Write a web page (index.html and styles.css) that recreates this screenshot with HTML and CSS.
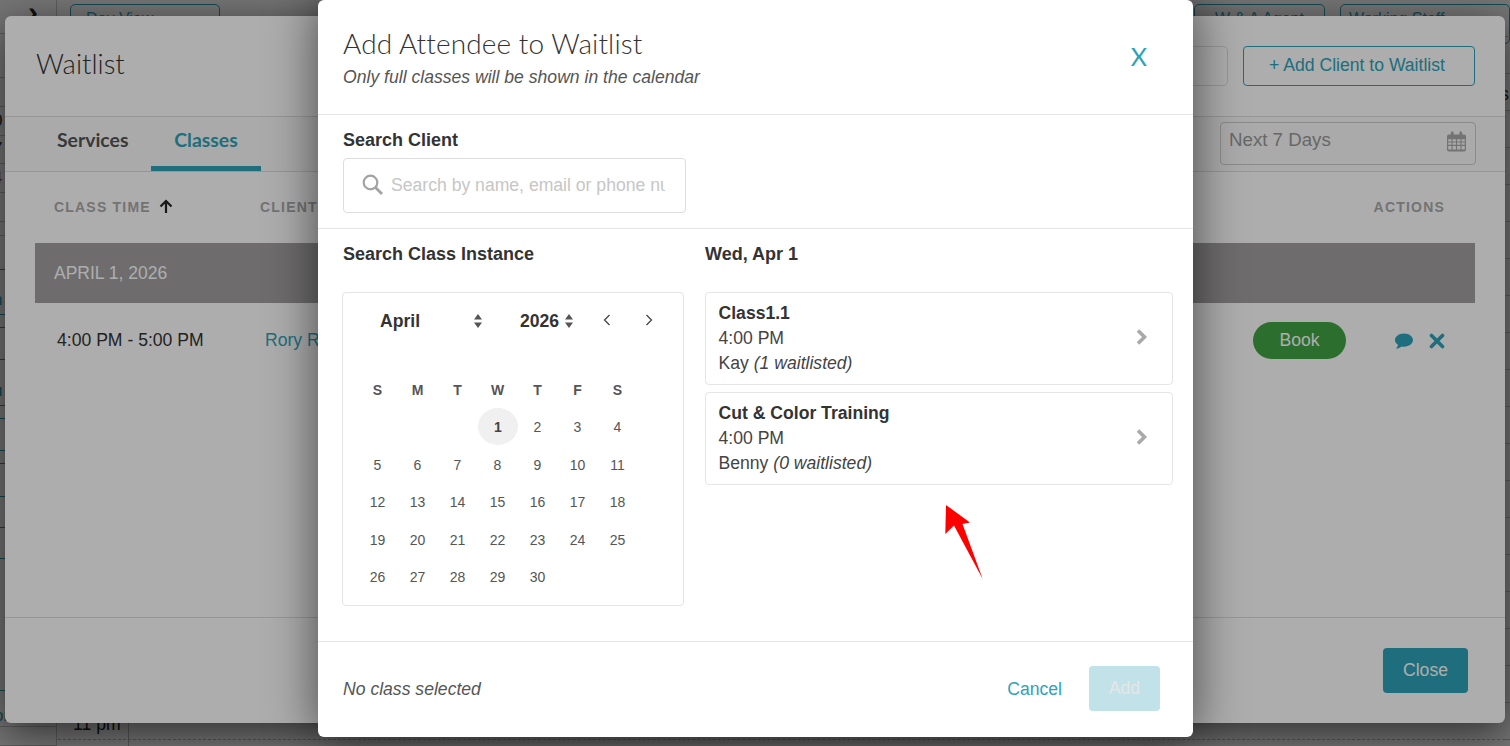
FILE: index.html
```html
<!DOCTYPE html>
<html lang="en">
<head>
<meta charset="utf-8">
<title>Add Attendee to Waitlist</title>
<link rel="stylesheet" href="styles.css">
</head>
<body>
<div class="page">
  <div class="topbar">
    <span class="chev-back">&#8250;</span>
    <div class="pill-select wide">Day View</div>
    <div class="topbar-fill"></div>
    <div class="pill-select mid">W &amp; A Agent</div>
    <div class="pill-select staff">Working Staff</div>
  </div>
  <div class="rail">
    <div></div><div></div><div></div><div><i>0</i></div><div><i>7</i></div><div><i class="warm">4</i></div><div></div><div></div>
    <div class="t"></div><div class="t"><i>n</i></div><div class="t"></div><div class="t"></div><div class="t"><i>u</i></div><div class="t"></div><div class="t"></div><div class="t"></div><div class="t"></div><div class="t"></div><div class="t"></div><div class="t"></div>
    <div class="end"><i>or</i></div><div class="end"></div><div class="last"><i>ck</i></div>
  </div>
  <div class="hour">11 pm</div>
  <div class="grid-right"><span>s</span></div>
  <div class="hour-line"></div>
</div>

<div class="scrim"></div>

<section class="waitlist">
  <header class="wl-head">
    <h2 class="wl-title">Waitlist</h2>
    <div class="wl-tools">
      <div class="wl-search"></div>
      <div class="wl-add">+ Add Client to Waitlist</div>
    </div>
  </header>
  <nav class="wl-tabs">
    <span class="tab">Services</span>
    <span class="tab active">Classes</span>
    <div class="wl-range">Next 7 Days
      <svg class="cal-icon" viewBox="0 0 20 21" width="19" height="21"><path fill="#aaa" d="M2 3h2V1.5a1.5 1.5 0 0 1 3 0V3h6V1.500a1.500 1.500 0 0 1 3 0V3h2a2 2 0 0 1 2 2v14a2 2 0 0 1-2 2H2a2 2 0 0 1-2-2V5a2 2 0 0 1 2-2zm-.7 5v2.400h3.400V8zm4.600 0v2.400h3.500V8zm4.700 0v2.400h3.500V8zm4.700 0v2.400h3.400V8zM1.300 11.600V14h3.400v-2.400zm4.600 0V14h3.500v-2.400zm4.700 0V14h3.500v-2.400zm4.700 0V14h3.400v-2.400zM1.300 15.200v3a.6.6 0 0 0 .6.6h2.800v-3.600zm4.600 0v3.600h3.500v-3.600zm4.700 0v3.600h3.500v-3.600zm4.700 0v3.600h2.800a.6.6 0 0 0 .6-.6v-3z"/></svg>
    </div>
  </nav>
  <div class="wl-body">
    <div class="wl-cols">
      <div class="wl-col-time">CLASS TIME <svg class="up" viewBox="0 0 14 14" width="14" height="14"><path fill="none" stroke="#222" stroke-width="2.200" d="M7 14V2M1.500 7.500 7 2l5.500 5.500"/></svg></div>
      <div class="wl-col-client">CLIENT</div>
      <div class="wl-col-actions">ACTIONS</div>
    </div>
    <div class="wl-band">APRIL 1, 2026</div>
    <div class="wl-row">
      <div class="wl-time">4:00 PM - 5:00 PM</div>
      <div class="wl-client">Rory Rogers</div>
      <div class="wl-book">Book</div>
      <svg class="wl-chat" viewBox="0 0 18 16" width="18" height="16"><path fill="#2ea3b8" d="M9 .5c5 0 9 2.900 9 6.600s-4 6.600-9 6.600c-.9 0-1.700-.1-2.500-.3C5.300 14.500 3.200 15.500.8 15.500c1.100-1 2-2.300 2.200-3.600C1.200 10.700 0 9 0 7.100 0 3.400 4 .5 9 .5z"/></svg>
      <svg class="wl-x" viewBox="0 0 16 16" width="16" height="16"><path fill="none" stroke="#2ea3b8" stroke-width="3.600" stroke-linecap="round" d="M2.500 2.500l11 11M13.500 2.500l-11 11"/></svg>
    </div>
  </div>
  <footer class="wl-foot"><div class="wl-close">Close</div></footer>
</section>

<div class="scrim"></div>

<section class="dialog">
  <header class="dg-head">
    <div>
      <h1 class="dg-title">Add Attendee to Waitlist</h1>
      <p class="dg-sub">Only full classes will be shown in the calendar</p>
    </div>
    <span class="dg-x">X</span>
  </header>
  <div class="dg-search">
    <label class="label" for="client">Search Client</label>
    <div class="search-box">
      <svg class="search-icon" viewBox="0 0 21 21" width="21" height="21"><circle cx="8.500" cy="8.500" r="6.800" fill="none" stroke="#a3a3a3" stroke-width="2.200"/><path d="M13.500 13.500 20 20" stroke="#a3a3a3" stroke-width="2.800" fill="none"/></svg>
      <input id="client" class="search-input" type="text" placeholder="Search by name, email or phone number">
    </div>
  </div>
  <div class="dg-body">
    <div class="col-left">
      <div class="label">Search Class Instance</div>
      <div class="calendar">
        <div class="cal-head">
          <span class="cal-month">April</span>
          <svg class="updown m" viewBox="0 0 8 14" width="8" height="14"><path fill="#555" d="M4 0l4 5.500H0zM4 14l4-5.500H0z"/></svg>
          <span class="cal-year">2026</span>
          <svg class="updown y" viewBox="0 0 8 14" width="8" height="14"><path fill="#555" d="M4 0l4 5.500H0zM4 14l4-5.500H0z"/></svg>
          <svg class="nav prev" viewBox="0 0 8 12" width="8" height="12"><path fill="none" stroke="#444" stroke-width="1.300" d="M6.500 1 1.500 6l5 5"/></svg>
          <svg class="nav next" viewBox="0 0 8 12" width="8" height="12"><path fill="none" stroke="#444" stroke-width="1.300" d="M1.500 1l5 5-5 5"/></svg>
        </div>
        <div class="cal-grid">
          <b>S</b><b>M</b><b>T</b><b>W</b><b>T</b><b>F</b><b>S</b>
          <span></span><span></span><span></span><span class="today">1</span><span>2</span><span>3</span><span>4</span>
          <span>5</span><span>6</span><span>7</span><span>8</span><span>9</span><span>10</span><span>11</span>
          <span>12</span><span>13</span><span>14</span><span>15</span><span>16</span><span>17</span><span>18</span>
          <span>19</span><span>20</span><span>21</span><span>22</span><span>23</span><span>24</span><span>25</span>
          <span>26</span><span>27</span><span>28</span><span>29</span><span>30</span>
        </div>
      </div>
    </div>
    <div class="col-right">
      <div class="label">Wed, Apr 1</div>
      <div class="cards">
        <div class="card">
          <div>
            <div class="card-name">Class1.1</div>
            <div>4:00 PM</div>
            <div>Kay <em>(1 waitlisted)</em></div>
          </div>
          <svg class="card-chev" viewBox="0 0 12 16" width="12" height="16"><path fill="none" stroke="#aaa" stroke-width="3.600" d="M2 1.500 8.500 8 2 14.500"/></svg>
        </div>
        <div class="card">
          <div>
            <div class="card-name">Cut &amp; Color Training</div>
            <div>4:00 PM</div>
            <div>Benny <em>(0 waitlisted)</em></div>
          </div>
          <svg class="card-chev" viewBox="0 0 12 16" width="12" height="16"><path fill="none" stroke="#aaa" stroke-width="3.600" d="M2 1.500 8.500 8 2 14.500"/></svg>
        </div>
      </div>
    </div>
  </div>
  <footer class="dg-foot">
    <em class="dg-status">No class selected</em>
    <span class="dg-cancel">Cancel</span>
    <span class="dg-add">Add</span>
  </footer>
</section>

<svg class="arrow" viewBox="0 0 40 76" width="40" height="76"><polygon fill="#ff0000" points="2,1 26,18.500 18.500,20 38.700,75 10,21.500 1.300,30"/></svg>
</body>
</html>
```

FILE: styles.css
```css
* { box-sizing: border-box; }
html, body { margin: 0; height: 100%; }
body {
  position: relative;
  width: 1510px;
  height: 746px;
  overflow: hidden;
  background: #fff;
  font-family: "Liberation Sans", Arial, sans-serif;
  font-size: 17.6px;
  color: #333;
}

/* page behind the dialogs */
.page { position: absolute; inset: 0; overflow: hidden; }
.topbar { display: flex; align-items: flex-start; height: 34px; padding-top: 4px; padding-left: 28px; }
.chev-back { width: 42px; font-size: 30px; line-height: 16px; font-weight: 700; color: #222; }
.pill-select { height: 40px; border: 1px solid #2ea3b8; border-radius: 5px; color: #2ea3b8; padding: 5px 15px; font-size: 16px; }
.wide { width: 150px; }
.topbar-fill { flex: 1; }
.mid { width: 131px; margin-right: 15px; text-align: center; }
.staff { width: 170px; flex: none; padding-left: 8px; }
.rail {
  position: absolute; left: 0; top: 0; width: 57px; height: 746px; overflow: hidden;
  border-right: 1px solid #ccc;
  display: grid;
  grid-template-rows: 34px 44px 29px 29px 28px 29px 29px 14px 34px 45px 13px 32px 46px 13px 32px 13px 33px 31px 31px 132px 36px 19px;
}
.rail > div { border-bottom: 1px solid #ccc; position: relative; }
.rail > .t { border-bottom-color: #2ea3b8; }
.rail i { position: absolute; left: -7px; bottom: 4px; font-style: normal; color: #2ea3b8; font-size: 17px; }
.rail > div:nth-child(-n+8) i { color: #333; }
.rail .warm { color: #c45a00 !important; }
.rail > .end i { left: -6px; bottom: 0; }
.rail > .last { border-bottom: 0; width: 36px; }
.rail > .last i { left: -2px; bottom: auto; top: 4px; }
.hour { position: absolute; left: 57px; top: 708px; width: 72px; height: 38px; padding: 6px 0 0 16px; font-size: 17.6px; border-right: 1px solid #bbb; color: #222; }
.hour-line { position: absolute; left: 58px; right: 0; top: 739px; border-top: 1px dashed #bbb; }
.grid-right {
  position: absolute; right: 0; top: 0; width: 5px; height: 746px;
  background: repeating-linear-gradient(to bottom, transparent 0 36px, #ccc 36px 37px);
  font-size: 18px;
}
.grid-right span { position: absolute; left: -5px; top: 84px; color: #333; }
.scrim { position: absolute; inset: 0; background: rgba(0, 0, 0, .32); }

/* waitlist dialog */
.waitlist {
  position: absolute; left: 5px; top: 16px; width: 1500px; height: 707px;
  background: #fff; border-radius: 6px;
  display: flex; flex-direction: column;
  box-shadow: 0 10px 40px rgba(0, 0, 0, .6);
}
.wl-head { height: 101px; flex: none; padding: 30px 30px 0 31px; display: flex; justify-content: space-between; border-bottom: 1px solid #ddd; }
.wl-title { margin: 0; padding-top: 1px; font: 300 27.500px/34px Lato, sans-serif; color: #333; }
.wl-tools { display: flex; gap: 15px; }
.wl-search { width: 200px; height: 40px; border: 1px solid #ddd; border-radius: 5px; }
.wl-add { width: 232px; height: 40px; border: 1px solid #2ea3b8; border-radius: 4px; color: #2ea3b8; text-align: center; line-height: 36px; padding-right: 4px; }
.wl-tabs { height: 55px; flex: none; display: flex; border-bottom: 1px solid #ddd; position: relative; background: #fbfbfb; }
.tab { width: 110px; text-align: center; font: 700 19.400px/46px Lato, sans-serif; color: #555; height: 54px; }
.tab:first-child { margin-left: 36px; margin-right: 0; text-align: left; padding-left: 16px; }
.tab.active { color: #2ea3b8; border-bottom: 5px solid #2ea3b8; }
.wl-range { margin-left: auto; margin-right: 29px; margin-top: 5px; width: 256px; height: 43px; border: 1px solid #ccc; border-radius: 4px; padding: 6px 8px; font-size: 18.700px; color: #999; position: relative; }
.cal-icon { position: absolute; right: 9px; top: 8px; }
.wl-body { flex: 1; }
.wl-cols { position: relative; height: 71px; font-size: 14px; font-weight: 700; letter-spacing: 1.200px; color: #aaa; }
.wl-col-time { position: absolute; left: 49px; top: 27px; }
.up { position: absolute; left: 105px; top: 0; }
.wl-col-client { position: absolute; left: 255px; top: 27px; }
.wl-col-actions { position: absolute; right: 60px; top: 27px; }
.wl-band { margin: 0 30px; height: 60px; background: #a3a0a1; color: #fff; padding-left: 19px; line-height: 60px; font-size: 17.500px; }
.wl-row { position: relative; height: 74px; }
.wl-time { position: absolute; left: 52px; top: 27px; }
.wl-client { position: absolute; left: 260px; top: 27px; color: #2ea3b8; }
.wl-book { position: absolute; left: 1248px; top: 19px; width: 93px; height: 37px; border-radius: 19px; background: #41a243; color: #fff; text-align: center; line-height: 36px; }
.wl-chat { position: absolute; left: 1390px; top: 30px; }
.wl-x { position: absolute; left: 1424px; top: 30px; }
.wl-foot { height: 106px; flex: none; border-top: 1px solid #ddd; display: flex; justify-content: flex-end; padding: 30px 37px 0 0; }
.wl-close { width: 85px; height: 45px; background: #2ea3b8; border-radius: 4px; color: #fff; text-align: center; line-height: 45px; }

/* top dialog */
.dialog {
  position: absolute; left: 318px; top: 0; width: 875px; height: 737px;
  background: #fff; border-radius: 6px;
  display: flex; flex-direction: column;
  box-shadow: 0 0 50px rgba(0, 0, 0, .6);
}
.dg-head { height: 115px; flex: none; padding: 26px 46px 0 25px; display: flex; justify-content: space-between; border-bottom: 1px solid #e5e5e5; }
.dg-title { margin: 0; font: 300 28px/34px Lato, sans-serif; color: #333; letter-spacing: .1px; }
.dg-sub { margin: 7px 0 0; font-size: 17.600px; font-style: italic; color: #555; line-height: 20px; }
.dg-x { font: 400 25px/60px Lato, sans-serif; color: #2ea3b8; }
.dg-search { height: 114px; flex: none; padding: 14px 0 0 25px; border-bottom: 1px solid #e5e5e5; }
.label { display: block; font-weight: 700; font-size: 18px; line-height: 22px; color: #333; }
.search-box { width: 343px; height: 55px; margin-top: 7px; border: 1px solid #ddd; border-radius: 4px; display: flex; align-items: center; padding: 0 20px 0 18px; gap: 8px; }
.search-icon { flex: none; margin-top: -3px; }
.search-input { flex: 1; min-width: 0; border: 0; outline: 0; padding: 0; font: 17.600px "Liberation Sans", Arial, sans-serif; color: #333; background: transparent; }
.search-input::placeholder { color: #c6c6c6; opacity: 1; }
.dg-body { flex: 1; display: flex; padding: 14px 20px 0 24px; gap: 21px; }
.col-left { width: 342px; flex: none; }
.col-left .label { padding-left: 1px; }
.col-right { flex: 1; }
.calendar { margin-top: 27px; width: 342px; height: 314px; border: 1px solid #e5e5e5; border-radius: 4px; padding: 0 15px; }
.cal-head { position: relative; height: 60px; font-weight: 700; color: #333; }
.cal-month { position: absolute; left: 22px; top: 18px; }
.cal-year { position: absolute; left: 162px; top: 18px; }
.updown { position: absolute; top: 21px; }
.updown.m { left: 116px; }
.updown.y { left: 207px; }
.nav { position: absolute; top: 21px; }
.nav.prev { left: 245px; }
.nav.next { left: 287px; }
.cal-grid { display: grid; grid-template-columns: repeat(7, 40px); grid-auto-rows: 37.500px; margin-top: 18px; margin-left: -.5px; font-size: 14px; color: #555; }
.cal-grid b, .cal-grid span { display: flex; align-items: center; justify-content: center; }
.cal-grid b { color: #555; }
.cal-grid .today { width: 40px; height: 37px; margin-top: -1px; padding-top: 1px; margin-left: .5px; border-radius: 50%; background: #f0f0f0; font-weight: 700; color: #444; }
.cards { margin-top: 27px; display: flex; flex-direction: column; gap: 7px; }
.card { height: 93px; width: 468px; border: 1px solid #e5e5e5; border-radius: 4px; padding: 0 24px 0 12.500px; display: flex; justify-content: space-between; align-items: center; line-height: 25px; color: #444; }
.card-name { font-weight: 700; color: #333; }
.card em { color: #444; }
.card-chev { flex: none; margin-top: -3px; }
.dg-foot { height: 96px; flex: none; border-top: 1px solid #e5e5e5; display: flex; align-items: center; padding: 0 33px 0 25px; }
.dg-status { color: #555; margin-right: auto; }
.dg-cancel { color: #2ea3b8; margin-right: 27px; margin-left: 1px; }
.dg-add { width: 71px; height: 45px; margin-top: -2px; border-radius: 4px; background: #c2e2e9; color: #e6e6e6; text-align: center; line-height: 45px; }

.arrow { position: absolute; left: 944px; top: 504px; }
```
